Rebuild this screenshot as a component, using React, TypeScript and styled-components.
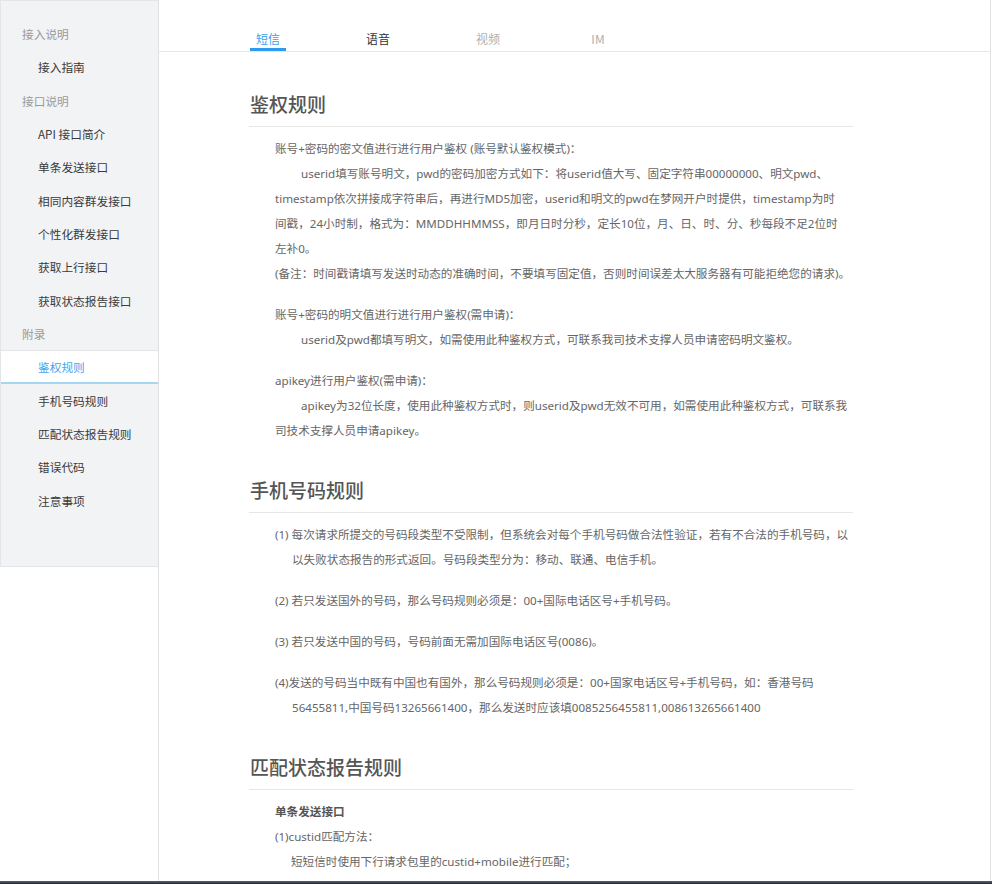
import React from "react";
import styled, { createGlobalStyle } from "styled-components";

const Global = createGlobalStyle`
  html, body { margin: 0; padding: 0; background: #fff; }
  body { font-family: "Noto Sans", "Noto Sans CJK SC", sans-serif; }
  * { box-sizing: border-box; }
`;

const Page = styled.div`
  display: flex;
  width: 991px;
  min-height: 100vh;
  align-items: stretch;
`;

const Sidebar = styled.nav`
  width: 158px;
  flex: none;
  align-self: flex-start;
  background: #f2f3f5;
  border: 1px solid #e4e5e8;
  border-right: none;
  padding: 16px 0 49px;
  display: flex;
  flex-direction: column;
`;

const NavRow = styled.div<{ $group?: boolean; $active?: boolean }>`
  height: 33.33px;
  display: flex;
  align-items: center;
  padding-left: ${(p) => (p.$group ? "21px" : "37px")};
  font-size: 11.7px;
  font-family: "Noto Sans CJK SC", sans-serif;
  color: ${(p) => (p.$group ? "#9a9a9a" : p.$active ? "#44a6ee" : "#3a3a3a")};
  background: ${(p) => (p.$active ? "#fff" : "transparent")};
  border-top: ${(p) => (p.$active ? "1px solid #e4e5e8" : "none")};
  border-bottom: ${(p) => (p.$active ? "2px solid #a6d6f6" : "none")};
  padding-top: ${(p) => (p.$active ? "1px" : "0")};
`;

const Main = styled.main`
  flex: 1;
  border-left: 1px solid #e2e2e2;
  border-right: 1px solid #e2e2e2;
  min-width: 0;
`;

const TabBar = styled.div`
  height: 52px;
  border-bottom: 1px solid #e6e6e6;
  padding-left: 54px;
  display: flex;
  align-items: flex-end;
`;

const Tab = styled.div<{ $tone: "active" | "dark" | "muted" }>`
  width: 110px;
  display: flex;
  justify-content: center;
  font-family: "Noto Sans CJK SC", sans-serif;
  font-size: 12px;
  color: ${(p) => (p.$tone === "active" ? "#3aa1ee" : p.$tone === "dark" ? "#333" : "#b0b0b0")};
`;

const TabLabel = styled.span<{ $active?: boolean }>`
  line-height: 18px;
  padding: 0 6px;
  border-bottom: 3px solid ${(p) => (p.$active ? "#2f9bef" : "transparent")};
`;

const Content = styled.div`
  width: 694px;
  padding: 38px 0 40px 90px;
  font-family: "Noto Sans", "Noto Sans CJK SC", sans-serif;
  color: #666;
  font-size: 11.6px;
`;

const Section = styled.section`
  & + & { margin-top: 33px; }
`;

const Heading = styled.h2`
  margin: 0 0 9px;
  padding: 0 0 8px 1px;
  font-family: "Noto Sans CJK SC", sans-serif;
  font-size: 19px;
  line-height: 28px;
  font-weight: 500;
  color: #555;
  border-bottom: 1px solid #e6e6e6;
`;

const Para = styled.div`
  margin-left: 26px;
  line-height: 25px;
  & + & { margin-top: 16px; }
`;

const Line = styled.div<{ $indent?: number; $bold?: boolean }>`
  white-space: nowrap;
  padding-left: ${(p) => p.$indent ?? 0}px;
  font-weight: ${(p) => (p.$bold ? 700 : 400)};
  color: ${(p) => (p.$bold ? "#555" : "inherit")};
`;

const Taskbar = styled.div`
  position: fixed;
  left: 0;
  right: 0;
  bottom: 0;
  height: 3px;
  background: linear-gradient(#5a6675, #1e2733);
`;

const nav: { label: string; group?: boolean; active?: boolean }[] = [
  { label: "接入说明", group: true },
  { label: "接入指南" },
  { label: "接口说明", group: true },
  { label: "API 接口简介" },
  { label: "单条发送接口" },
  { label: "相同内容群发接口" },
  { label: "个性化群发接口" },
  { label: "获取上行接口" },
  { label: "获取状态报告接口" },
  { label: "附录", group: true },
  { label: "鉴权规则", active: true },
  { label: "手机号码规则" },
  { label: "匹配状态报告规则" },
  { label: "错误代码" },
  { label: "注意事项" },
];

export default function App() {
  return (
    <>
      <Global />
      <Page>
        <Sidebar>
          {nav.map((n) => (
            <NavRow key={n.label} $group={n.group} $active={n.active}>
              {n.label}
            </NavRow>
          ))}
        </Sidebar>
        <Main>
          <TabBar>
            <Tab $tone="active"><TabLabel $active>短信</TabLabel></Tab>
            <Tab $tone="dark"><TabLabel>语音</TabLabel></Tab>
            <Tab $tone="muted"><TabLabel>视频</TabLabel></Tab>
            <Tab $tone="muted"><TabLabel>IM</TabLabel></Tab>
          </TabBar>
          <Content>
            <Section>
              <Heading>鉴权规则</Heading>
              <Para>
                <Line>账号+密码的密文值进行进行用户鉴权 (账号默认鉴权模式)：</Line>
                <Line $indent={26}>userid填写账号明文，pwd的密码加密方式如下：将userid值大写、固定字符串00000000、明文pwd、</Line>
                <Line>timestamp依次拼接成字符串后，再进行MD5加密，userid和明文的pwd在梦网开户时提供，timestamp为时</Line>
                <Line>间戳，24小时制，格式为：MMDDHHMMSS，即月日时分秒，定长10位，月、日、时、分、秒每段不足2位时</Line>
                <Line>左补0。</Line>
                <Line>(备注：时间戳请填写发送时动态的准确时间，不要填写固定值，否则时间误差太大服务器有可能拒绝您的请求)。</Line>
              </Para>
              <Para>
                <Line>账号+密码的明文值进行进行用户鉴权(需申请)：</Line>
                <Line $indent={26}>userid及pwd都填写明文，如需使用此种鉴权方式，可联系我司技术支撑人员申请密码明文鉴权。</Line>
              </Para>
              <Para>
                <Line>apikey进行用户鉴权(需申请)：</Line>
                <Line $indent={26}>apikey为32位长度，使用此种鉴权方式时，则userid及pwd无效不可用，如需使用此种鉴权方式，可联系我</Line>
                <Line>司技术支撑人员申请apikey。</Line>
              </Para>
            </Section>
            <Section>
              <Heading>手机号码规则</Heading>
              <Para>
                <Line>(1) 每次请求所提交的号码段类型不受限制，但系统会对每个手机号码做合法性验证，若有不合法的手机号码，以</Line>
                <Line $indent={17}>以失败状态报告的形式返回。号码段类型分为：移动、联通、电信手机。</Line>
              </Para>
              <Para>
                <Line>(2) 若只发送国外的号码，那么号码规则必须是：00+国际电话区号+手机号码。</Line>
              </Para>
              <Para>
                <Line>(3) 若只发送中国的号码，号码前面无需加国际电话区号(0086)。</Line>
              </Para>
              <Para>
                <Line>(4)发送的号码当中既有中国也有国外，那么号码规则必须是：00+国家电话区号+手机号码，如：香港号码</Line>
                <Line $indent={17}>56455811,中国号码13265661400，那么发送时应该填0085256455811,008613265661400</Line>
              </Para>
            </Section>
            <Section>
              <Heading>匹配状态报告规则</Heading>
              <Para>
                <Line $bold>单条发送接口</Line>
                <Line>(1)custid匹配方法：</Line>
                <Line $indent={16}>短短信时使用下行请求包里的custid+mobile进行匹配；</Line>
                <Line $indent={16}>长短信时使用下行请求包里的custid+mobile+pknum进行匹配；</Line>
              </Para>
            </Section>
          </Content>
        </Main>
      </Page>
      <Taskbar />
    </>
  );
}
